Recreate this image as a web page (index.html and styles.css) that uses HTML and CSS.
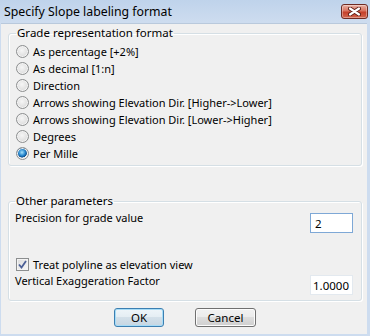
FILE: index.html
```html
<!DOCTYPE html>
<html lang="en">
<head>
  <meta charset="UTF-8" />
  <title>Specify Slope labeling format</title>
  <link rel="stylesheet" href="styles.css">
</head>
<body>

<div class="window">
  <div class="titlebar">
    <span class="title">Specify Slope labeling format</span>
    <button class="close" aria-label="Close">
      <svg width="13" height="9" viewBox="0 0 13 9">
        <path d="M2 1.5 L11 7.5 M11 1.5 L2 7.5" stroke="#5a1a12" stroke-width="4" stroke-linecap="round"/>
        <path d="M2 1.5 L11 7.5 M11 1.5 L2 7.5" stroke="#fff" stroke-width="2.2" stroke-linecap="round"/>
      </svg>
    </button>
  </div>

  <div class="client">
    <fieldset class="group group-grade">
      <legend>Grade representation format</legend>
      <label class="option"><input type="radio" name="grade"> As percentage [+2%]</label>
      <label class="option"><input type="radio" name="grade"> As decimal [1:n]</label>
      <label class="option"><input type="radio" name="grade"> Direction</label>
      <label class="option"><input type="radio" name="grade"> Arrows showing Elevation Dir. [Higher-&gt;Lower]</label>
      <label class="option"><input type="radio" name="grade"> Arrows showing Elevation Dir. [Lower-&gt;Higher]</label>
      <label class="option"><input type="radio" name="grade"> Degrees</label>
      <label class="option"><input type="radio" name="grade" checked> Per Mille</label>
    </fieldset>

    <fieldset class="group group-other">
      <legend>Other parameters</legend>
      <div class="field">
        <span>Precision for grade value</span>
        <input type="text" class="textbox focused" value="2">
      </div>
      <label class="option check"><input type="checkbox" checked> Treat polyline as elevation view</label>
      <div class="field field-tight">
        <span>Vertical Exaggeration Factor</span>
        <input type="text" class="textbox" value="1.0000">
      </div>
    </fieldset>

    <div class="buttons">
      <button class="btn default">OK</button>
      <button class="btn cancel">Cancel</button>
    </div>
  </div>
</div>

</body>
</html>
```

FILE: styles.css
```css
body {
  margin: 0;
  font-family: 'Noto Sans', 'Open Sans', sans-serif;
  font-size: 11px;
  color: #000;
  background: #c9daee;
}
.window {
  width: 370px;
  height: 336px;
  box-sizing: border-box;
  display: flex;
  flex-direction: column;
  background: linear-gradient(#bfd3eb, #cddcef 22px, #cddcef);
  padding: 0 3px 2px 1px;
}
.titlebar {
  height: 22px;
  display: flex;
  align-items: center;
  justify-content: space-between;
  padding: 0 1px 1px 3px;
}
.title {
  font-size: 12.3px;
  color: #000;
}
.close {
  width: 27px;
  height: 15px;
  padding: 0;
  border: 1px solid #6e2a22;
  border-radius: 3px;
  background: linear-gradient(#e8b1a5, #d8735f 45%, #c5402a 55%, #d2664f);
  box-shadow: inset 0 0 0 1px rgba(255,255,255,0.35);
  display: flex;
  align-items: center;
  justify-content: center;
  margin-right: -2px;
}
.client {
  flex: 1;
  background: #f0f0f0;
  border-top: 1px solid #b9c9dc;
  padding: 1px 5px 0 7px;
  display: flex;
  flex-direction: column;
}
.group {
  margin: 0;
  border: 1px solid #d5dfe5;
  border-radius: 3px;
  box-shadow: inset 1px 1px 0 #fff, 1px 1px 0 #fff;
  padding: 0 7px 3px 7px;
}
.group legend {
  padding: 0 1px;
  margin-left: 0;
  line-height: 16px;
  font-size: 11.5px;
}
.group-grade {
  padding-top: 2px;
  padding-bottom: 3px;
}
.group-other {
  margin-top: 27px;
  padding: 1px 8px 5px 6px;
}
.option {
  display: flex;
  align-items: center;
  height: 17px;
  white-space: nowrap;
}
.option input {
  appearance: none;
  margin: 0 4px 0 0;
  width: 13px;
  height: 13px;
  box-sizing: border-box;
  border: 1px solid #8c8e8f;
  border-radius: 50%;
  background: radial-gradient(circle at 45% 40%, #f6f6f6 0, #e2e2e2 55%, #cfcfcf 100%);
  box-shadow: inset 0 0 0 1px #f4f4f4;
  flex-shrink: 0;
}
.option input:checked {
  background: radial-gradient(circle at 45% 40%, #a8e2fb 0, #2a8ad0 35%, #0c4f8e 55%, #e9e9e9 60%, #dadada 100%);
}
.check {
  margin-top: 23px;
  padding-left: 1px;
}
.check input {
  border-radius: 0;
  background: linear-gradient(135deg, #dcdcdc, #f8f8f8);
}
.check input:checked {
  background: url("data:image/svg+xml;utf8,<svg xmlns='http://www.w3.org/2000/svg' width='11' height='11'><path d='M2 5.5 L4.5 8.5 L9 2' fill='none' stroke='%234b5f96' stroke-width='1.8'/></svg>") center no-repeat, linear-gradient(135deg, #dcdcdc, #f8f8f8);
}
.field {
  display: flex;
  justify-content: space-between;
  align-items: flex-start;
  line-height: 16px;
}
.textbox {
  margin-top: 3px;
  width: 43px;
  height: 20px;
  box-sizing: border-box;
  border: 1px solid #e3e9ef;
  background: #fff;
  font-family: inherit;
  font-size: 11.5px;
  padding: 0 2px;
  color: #000;
}
.textbox.focused {
  border-color: #7ea8d6;
  padding-left: 4px;
}
.field-tight .textbox {
  margin-top: 2px;
}
.buttons {
  display: flex;
  justify-content: center;
  gap: 31px;
  margin-top: 7px;
}
.btn {
  height: 19px;
  box-sizing: border-box;
  border: 1px solid #707070;
  border-radius: 3px;
  background: linear-gradient(#f2f2f2, #ebebeb 50%, #dddddd 50%, #cfcfcf);
  box-shadow: inset 0 0 0 1px #fcfcfc;
  font-family: inherit;
  font-size: 11.5px;
  padding: 0;
  color: #000;
}
.btn.default {
  width: 50px;
  border-color: #3c7fb1;
  box-shadow: inset 0 0 0 1px #a6dcf7;
  background: linear-gradient(#eef5f9, #e4edf3 50%, #d3e0e9 50%, #c6d6e2);
}
.btn.cancel {
  width: 61px;
}
```
